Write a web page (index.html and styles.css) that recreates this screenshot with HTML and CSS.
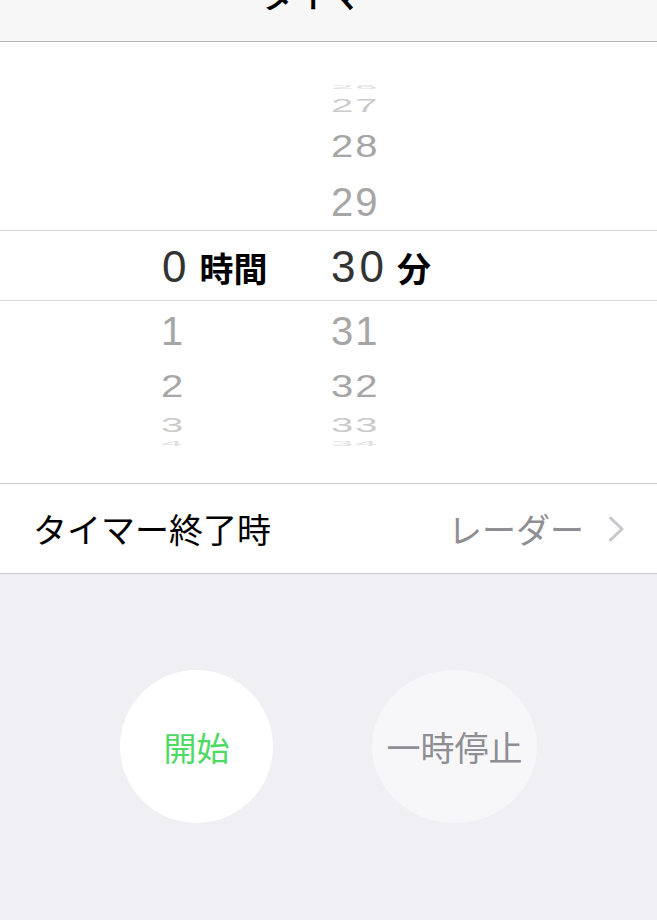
FILE: index.html
```html
<!DOCTYPE html>
<html lang="ja">
<head>
<meta charset="utf-8">
<title>タイマー</title>
<link rel="stylesheet" href="styles.css">
</head>
<body>
<header class="nav">
  <div class="nav-title">タイマー</div>
</header>

<section class="picker">
  <div class="zone zone-top">
    <div class="col col-hour"></div>
    <div class="col col-min">
      <div class="item h14 c3"><span class="s12">26</span></div>
      <div class="item h24 c2"><span class="s45">27</span></div>
      <div class="item h56 c1"><span class="s77">28</span></div>
      <div class="item h56 c1"><span class="s100">29</span></div>
    </div>
  </div>

  <div class="band">
    <div class="col col-hour"><span class="num">0</span><span class="unit">時間</span></div>
    <div class="col col-min"><span class="num">30</span><span class="unit">分</span></div>
  </div>

  <div class="zone zone-bottom">
    <div class="col col-hour">
      <div class="item h60 c1"><span class="s100">1</span></div>
      <div class="item h50 c1"><span class="s77">2</span></div>
      <div class="item h28 c2"><span class="s49">3</span></div>
      <div class="item h10 c3"><span class="s17">4</span></div>
    </div>
    <div class="col col-min">
      <div class="item h60 c1"><span class="s100">31</span></div>
      <div class="item h50 c1"><span class="s77">32</span></div>
      <div class="item h28 c2"><span class="s49">33</span></div>
      <div class="item h10 c3"><span class="s17">34</span></div>
    </div>
  </div>
</section>

<div class="row">
  <span class="row-label">タイマー終了時</span>
  <span class="row-value">レーダー
    <svg class="chevron" width="17" height="26" viewBox="0 0 17 26" aria-hidden="true">
      <polyline points="2.5,2 14,13 2.5,24" fill="none" stroke="#c7c7cc" stroke-width="3" stroke-linecap="round" stroke-linejoin="round"/>
    </svg>
  </span>
</div>

<section class="controls">
  <button class="circle start">開始</button>
  <button class="circle pause">一時停止</button>
</section>
</body>
</html>
```

FILE: styles.css
```css
* { box-sizing: border-box; }

html, body {
  margin: 0;
  padding: 0;
  background: #efeff4;
  height: 920px;
  overflow: hidden;
  font-family: "Noto Sans CJK JP", "Liberation Sans", sans-serif;
}

.nav {
  height: 42px;
  background: #f7f7f7;
  border-bottom: 1px solid #b2b2b2;
  overflow: hidden;
}

.nav-title {
  margin-top: -23px;
  font-size: 34px;
  line-height: 34px;
  font-weight: 500;
  text-align: center;
  color: #000;
}

.picker {
  background: #fff;
  height: 441px;
  display: flex;
  flex-direction: column;
}

.zone {
  display: flex;
  padding-left: 161px;
}

.zone-top {
  height: 188px;
}

.zone-top .col {
  display: flex;
  flex-direction: column;
  justify-content: flex-end;
}

.zone-bottom {
  height: 182px;
}

.col-hour {
  width: 170px;
}

.col-min {
  width: 200px;
}

.item {
  display: flex;
  align-items: center;
  font-family: "Liberation Sans", "Helvetica Neue", Arial, sans-serif;
  font-size: 40px;
  line-height: 40px;
  letter-spacing: 2px;
}

.item span {
  display: inline-block;
  line-height: 40px;
  transform-origin: 50% 50%;
}

.h10 { height: 10px; }
.h14 { height: 14px; }
.h24 { height: 24px; }
.h28 { height: 28px; }
.h50 { height: 50px; }
.h56 { height: 56px; }
.h60 { height: 60px; }

.c1 { color: #a6a6a6; }
.c2 { color: #cbcbcb; }
.c3 { color: #e0e0e0; }

.s12 { transform: scaleY(0.12); }
.s17 { transform: scaleY(0.17); }
.s45 { transform: scaleY(0.45); }
.s49 { transform: scaleY(0.49); }
.s77 { transform: scaleY(0.77); }
.s100 { transform: none; }

.band {
  display: flex;
  padding-left: 162px;
  height: 71px;
  border-top: 1px solid #d9d9d9;
  border-bottom: 1px solid #d9d9d9;
  padding-top: 2px;
  line-height: 67px;
  white-space: nowrap;
}

.band .col-hour {
  width: 169px;
}

.num {
  font-family: "Liberation Sans", "Helvetica Neue", Arial, sans-serif;
  font-size: 44px;
  letter-spacing: 4px;
  color: #333;
}

.unit {
  margin-left: 9px;
  font-family: "Noto Sans CJK JP", sans-serif;
  font-size: 34px;
  font-weight: 700;
  color: #000;
}

.row {
  height: 91px;
  background: #fff;
  border-top: 1px solid #c8c7cc;
  border-bottom: 1px solid #c8c7cc;
  display: flex;
  align-items: center;
  justify-content: space-between;
  padding: 0 32px 0 33px;
}

.row-label {
  font-size: 34px;
  color: #000;
}

.row-value {
  display: flex;
  align-items: center;
  gap: 24px;
  font-size: 34px;
  color: #8e8e93;
}

.chevron {
  display: block;
}

.controls {
  display: flex;
  align-items: flex-start;
  padding: 96px 0 0 120px;
  gap: 99px;
}

.circle {
  border: none;
  margin: 0;
  padding: 0;
  height: 153px;
  border-radius: 50%;
  font-family: "Noto Sans CJK JP", sans-serif;
  font-size: 33px;
  display: flex;
  align-items: center;
  justify-content: center;
}

.start {
  width: 153px;
  background: #fff;
  color: #4cd964;
}

.pause {
  width: 165px;
  background: #f7f7fa;
  color: #8e8e93;
  font-size: 34px;
}
```
